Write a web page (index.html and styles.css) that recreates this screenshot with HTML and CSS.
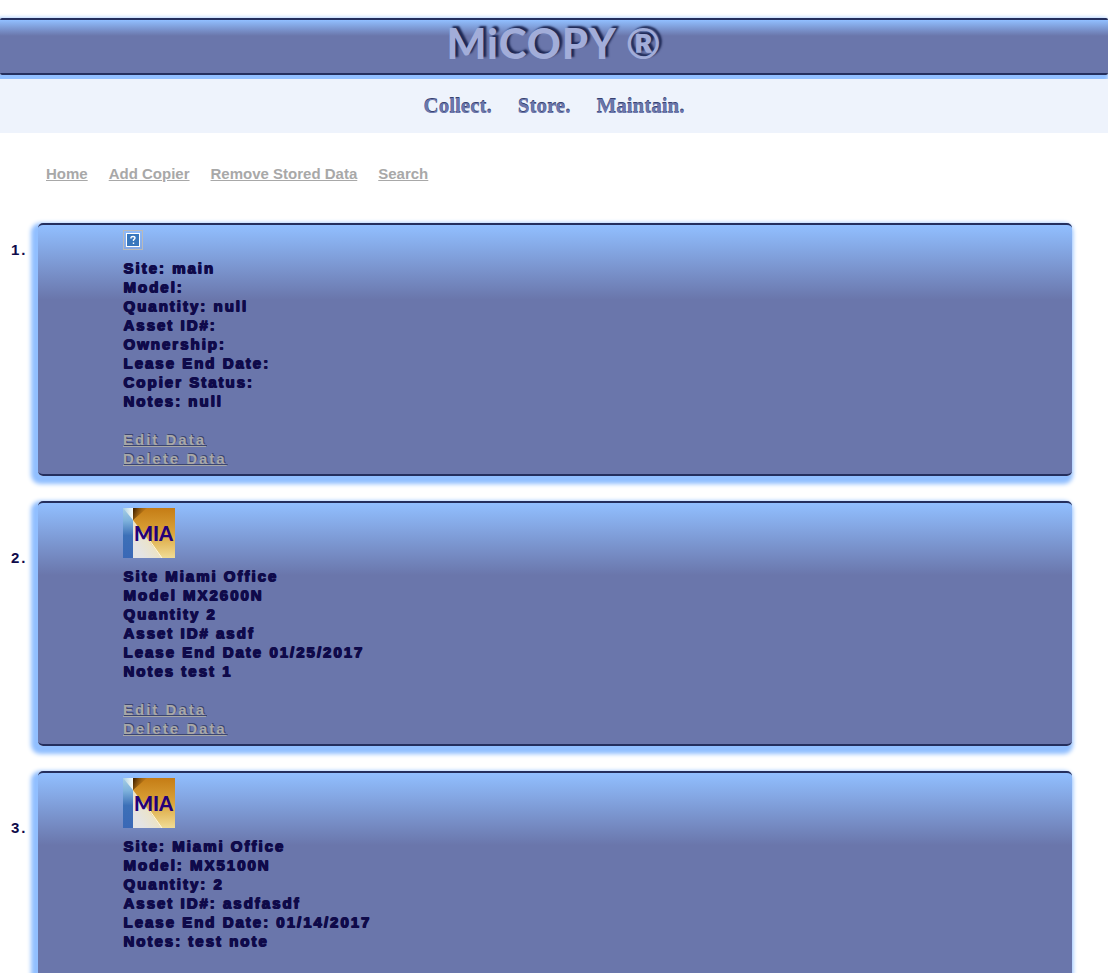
FILE: index.html
```html
<!DOCTYPE html>
<html lang="en">
<head>
<meta charset="utf-8">
<title>MiCOPY</title>
<link rel="stylesheet" href="styles.css">
</head>
<body>
<svg class="defs" aria-hidden="true">
  <defs>
    <linearGradient id="shadow" gradientUnits="userSpaceOnUse" x1="10" y1="4" x2="24" y2="10">
      <stop offset="0" stop-color="#4a2800"/><stop offset="1" stop-color="#c57c15" stop-opacity="0"/>
    </linearGradient>
    <linearGradient id="goldFade" x1="0" y1="0" x2="0" y2="1">
      <stop offset="0" stop-color="#c57c15"/><stop offset=".5" stop-color="#dba43a"/><stop offset="1" stop-color="#f0dc96"/>
    </linearGradient>
    <linearGradient id="paper" gradientUnits="userSpaceOnUse" x1="10" y1="34" x2="34" y2="18">
      <stop offset="0" stop-color="#e4e4e4"/><stop offset=".55" stop-color="#ece3c4"/><stop offset="1" stop-color="#ecd68e" stop-opacity="0"/>
    </linearGradient>
    <linearGradient id="blue" x1="0" y1="0" x2="0" y2="1">
      <stop offset="0" stop-color="#a5cde4"/><stop offset=".25" stop-color="#7fb2dc"/><stop offset=".55" stop-color="#3c70b8"/><stop offset="1" stop-color="#3a68b6"/>
    </linearGradient>
    <linearGradient id="shine" x1="0" y1="0" x2="1" y2="0">
      <stop offset="0" stop-color="#a9cfe4"/><stop offset="1" stop-color="#fbfcf4"/>
    </linearGradient>
    <symbol id="mia" viewBox="0 0 52 50">
      <rect width="10" height="50" fill="url(#blue)"/>
      <path d="M0 0H10V12Z" fill="url(#shine)"/>
      <rect x="10" width="42" height="50" fill="url(#goldFade)"/>
      <path d="M10 0H24L10 12Z" fill="url(#shadow)"/>
      <path d="M10 12L39 50H10Z" fill="url(#paper)"/>
      <path d="M27 33L39 50" stroke="#fff8df" fill="none"/>
      <text x="11" y="33" class="logo-text">MIA</text>
    </symbol>
  </defs>
</svg>

<header class="banner"><h1 class="brand">MiCOPY ®</h1></header>
<p class="tagline"><span>Collect.</span><span>Store.</span><span>Maintain.</span></p>

<nav class="nav">
  <a href="#home">Home</a>
  <a href="#add">Add Copier</a>
  <a href="#remove">Remove Stored Data</a>
  <a href="#search">Search</a>
</nav>

<main>
  <ol class="copiers">
    <li class="copier">
      <span class="number">1.</span>
      <article class="card">
        <div>
          <svg class="missing" viewBox="0 0 20 20" role="img" aria-label="Missing image">
            <rect x=".5" y=".5" width="19" height="19" fill="none" stroke="#b9b9b9"/>
            <rect x="3.5" y="3.5" width="13" height="13" fill="#3877bd" stroke="#fff"/>
            <path d="M8 8.5V7.5Q8 6.5 10 6.5T12 8Q12 9 10.5 9.8V11M10.5 12.5V14" fill="none" stroke="#fff" stroke-width="1.4"/>
          </svg>
        </div>
        <div>Site: main</div>
        <div>Model:</div>
        <div>Quantity: null</div>
        <div>Asset ID#:</div>
        <div>Ownership:</div>
        <div>Lease End Date:</div>
        <div>Copier Status:</div>
        <div>Notes: null</div>
        <div class="actions"><a href="#edit-1">Edit Data</a><a href="#delete-1">Delete Data</a></div>
      </article>
    </li>
    <li class="copier">
      <span class="number">2.</span>
      <article class="card">
        <div><svg class="logo" role="img" aria-label="MIA"><use href="#mia"/></svg></div>
        <div>Site Miami Office</div>
        <div>Model MX2600N</div>
        <div>Quantity 2</div>
        <div>Asset ID# asdf</div>
        <div>Lease End Date 01/25/2017</div>
        <div>Notes test 1</div>
        <div class="actions"><a href="#edit-2">Edit Data</a><a href="#delete-2">Delete Data</a></div>
      </article>
    </li>
    <li class="copier">
      <span class="number">3.</span>
      <article class="card">
        <div><svg class="logo" role="img" aria-label="MIA"><use href="#mia"/></svg></div>
        <div>Site: Miami Office</div>
        <div>Model: MX5100N</div>
        <div>Quantity: 2</div>
        <div>Asset ID#: asdfasdf</div>
        <div>Lease End Date: 01/14/2017</div>
        <div>Notes: test note</div>
        <div class="actions"><a href="#edit-3">Edit Data</a><a href="#delete-3">Delete Data</a></div>
      </article>
    </li>
  </ol>
</main>
</body>
</html>
```
FILE: styles.css
```css
* { box-sizing: border-box; }

body {
  margin: 0;
  padding-top: 18px;
  background: #fff;
  color: #0f0a4a;
  font: bold 15px/19px "Liberation Sans", Arial, sans-serif;
}

.defs { position: absolute; width: 0; height: 0; }

.banner,
.card {
  border-top: 2px solid #242f5e;
  border-bottom: 2px solid #242f5e;
  border-radius: 5px;
  background: linear-gradient(#91bfff, #6a76ab 30%);
  box-shadow: -3px 4px 4px 4px #91bfff;
}

.banner {
  border-radius: 2px;
  text-align: center;
}

.brand {
  margin: 0;
  padding-bottom: 7px;
  color: #a2add9;
  font: 900 42px/46px Lato, sans-serif;
  letter-spacing: 1px;
  text-shadow: 3px -2px 2px #1d2855;
}

.tagline {
  position: relative;
  display: flex;
  justify-content: center;
  gap: 26px;
  margin: 4px 0 0;
  padding: 15px 0;
  background: #eef3fc;
  color: #6a76ab;
  font: bold 21px/24px "Liberation Serif", "Times New Roman", serif;
  text-shadow: 0 -1px 0 #36416f;
}

.nav {
  display: flex;
  flex-wrap: wrap;
  gap: 21px;
  padding: 31px 46px 0;
}

a { color: #a8a8a8; }

.copiers {
  display: grid;
  gap: 25px;
  margin: 0;
  padding: 40px 36px 25px 11px;
  list-style: none;
  letter-spacing: 2px;
}

.copier {
  display: grid;
  grid-template-columns: 27px 1fr;
  align-items: baseline;
}

.card {
  padding: 5px 20px 6px 85px;
  text-shadow: 1px 0 0 #0f0a4a, 0 -1px 0 #0f0a4a, 1px -1px 0 #0f0a4a;
}

.missing,
.logo {
  margin-bottom: 5px;
  vertical-align: baseline;
}

.missing { width: 20px; height: 20px; }
.logo { width: 52px; height: 50px; }

.logo-text {
  fill: #23007a;
  font: 900 20px Lato, sans-serif;
  letter-spacing: 0;
  text-shadow: none;
}

.actions {
  display: flex;
  flex-direction: column;
  align-items: flex-start;
  margin-top: 19px;
  text-shadow: 1px -1px 0 #3c466f;
}
```
